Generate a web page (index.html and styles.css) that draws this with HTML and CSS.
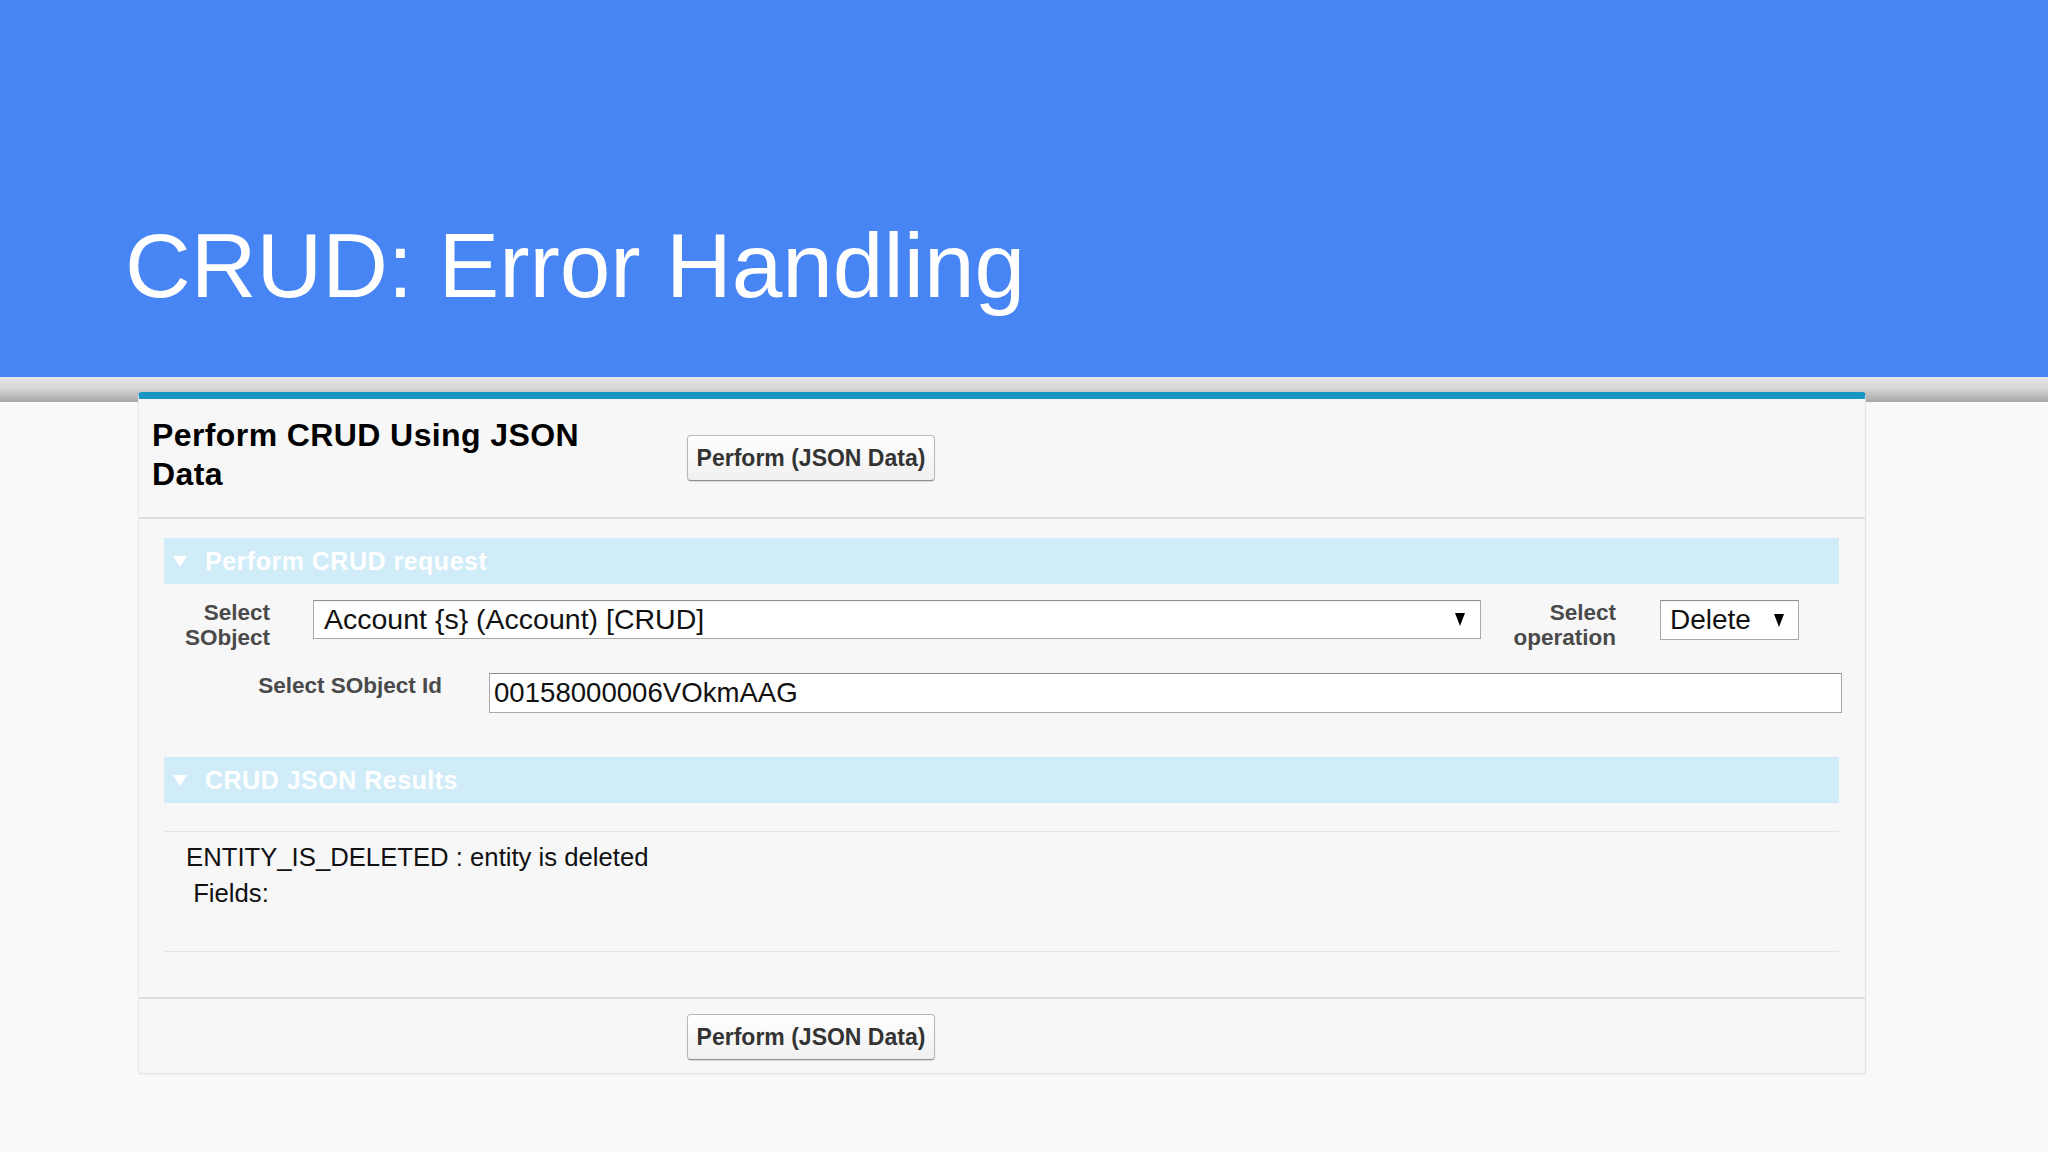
FILE: index.html
```html
<!DOCTYPE html>
<html lang="en">
<head>
<meta charset="utf-8">
<title>CRUD: Error Handling</title>
<link rel="stylesheet" href="styles.css">
</head>
<body>
<header class="slide-head">
  <h1 class="slide-title">CRUD: Error Handling</h1>
</header>
<div class="band"></div>
<main class="card">
  <div class="card-head">
    <h2 class="card-title">Perform CRUD Using JSON Data</h2>
    <button class="btn btn-head" type="button">Perform (JSON Data)</button>
  </div>
  <div class="card-body">
    <div class="sec-bar"><span class="tri"></span><span class="sec-text">Perform CRUD request</span></div>
    <div class="row row-obj">
      <span class="lbl lbl-obj">Select SObject</span>
      <div class="sel sel-obj"><span class="sel-text">Account {s} (Account) [CRUD]</span><span class="arr"></span></div>
      <span class="lbl lbl-op">Select operation</span>
      <div class="sel sel-op"><span class="sel-text">Delete</span><span class="arr"></span></div>
    </div>
    <div class="row row-id">
      <span class="lbl lbl-id">Select SObject Id</span>
      <div class="inp">00158000006VOkmAAG</div>
    </div>
    <div class="sec-bar sec-results"><span class="tri"></span><span class="sec-text">CRUD JSON Results</span></div>
    <div class="results">ENTITY_IS_DELETED : entity is deleted<br>&nbsp;Fields:</div>
  </div>
  <div class="card-foot">
    <button class="btn" type="button">Perform (JSON Data)</button>
  </div>
</main>
</body>
</html>
```
FILE: styles.css
```css
* { box-sizing: border-box; }

body {
  margin: 0;
  background: #f9f8fa;
  font-family: "Liberation Sans", Arial, sans-serif;
  width: 2048px;
  height: 1152px;
  overflow: hidden;
}

.slide-head {
  height: 377px;
  background: #4785f4;
  padding: 214px 0 0 125px;
}

.slide-title {
  margin: 0;
  font-size: 91px;
  font-weight: 400;
  line-height: normal;
  color: #ffffff;
}

.band {
  height: 25px;
  background: linear-gradient(#e8e8e8 0%, #d6d6d6 45%, #a7a7a7 100%);
}

.card {
  display: block;
  margin: -10px 0 0 138px;
  width: 1728px;
  background: #f7f7f8;
  border-top: 7px solid #1896c1;
  border-left: 1px solid #ebebed;
  border-right: 1px solid #e3e3e5;
  border-bottom: 1px solid #e3e3e5;
  border-radius: 4px;
  box-shadow: 0 1px 2px rgba(0, 0, 0, 0.05);
}

.card-head {
  display: flex;
  align-items: flex-start;
  padding: 17px 0 23px 13px;
  border-bottom: 2px solid #dfdfe2;
}

.card-title {
  margin: 0 85px 0 0;
  width: 450px;
  font-size: 32px;
  line-height: 39px;
  font-weight: 700;
  letter-spacing: 0.4px;
  color: #000;
}

.btn {
  width: 248px;
  height: 46px;
  padding: 0;
  font-family: "Liberation Sans", Arial, sans-serif;
  font-size: 23px;
  font-weight: 700;
  color: #333;
  background: linear-gradient(#ffffff, #f0f0f0);
  border: 1px solid #b8b8b8;
  border-bottom-color: #8e8e8e;
  border-radius: 4px;
  box-shadow: 0 1px 1px rgba(0, 0, 0, 0.12);
}

.btn-head { margin-top: 19px; }

.card-body {
  padding: 19px 26px 45px 25px;
}

.sec-bar {
  display: flex;
  align-items: center;
  height: 46px;
  background: #cfecf8;
  padding-left: 9px;
}

.tri {
  width: 0;
  height: 0;
  border-left: 7px solid transparent;
  border-right: 7px solid transparent;
  border-top: 11px solid #ffffff;
  margin-right: 18px;
}

.sec-text {
  font-size: 25px;
  font-weight: 700;
  letter-spacing: 0.5px;
  color: #ffffff;
}

.row {
  display: flex;
  align-items: flex-start;
}

.row-obj { margin-top: 16px; }
.row-id { margin-top: 23px; }

.lbl {
  flex: 0 0 auto;
  font-size: 22.5px;
  line-height: 25px;
  font-weight: 700;
  color: #4a4a4a;
  text-align: right;
}

.lbl-obj { width: 106px; }
.lbl-op { width: 107px; margin-left: 28px; }
.lbl-id { width: 278px; }

.sel {
  flex: 0 0 auto;
  display: flex;
  align-items: center;
  justify-content: space-between;
  height: 39px;
  background: #ffffff;
  border: 1px solid #a9a9a9;
  border-top-color: #8f8f8f;
  box-shadow: inset 0 1px 1px rgba(0, 0, 0, 0.06);
}

.sel-obj {
  width: 1168px;
  margin-left: 43px;
  padding: 0 15px 0 10px;
}

.sel-op {
  width: 139px;
  height: 40px;
  margin-left: 44px;
  padding: 0 14px 0 9px;
}

.sel-text {
  font-size: 28px;
  color: #111;
  white-space: nowrap;
}

.sel-obj .sel-text { font-size: 28.5px; }

.arr {
  width: 0;
  height: 0;
  border-left: 5px solid transparent;
  border-right: 5px solid transparent;
  border-top: 13px solid #000;
}

.inp {
  flex: 0 0 auto;
  width: 1353px;
  height: 40px;
  margin-left: 47px;
  padding-left: 4px;
  display: flex;
  align-items: center;
  font-size: 27.6px;
  color: #111;
  background: #ffffff;
  border: 1px solid #a9a9a9;
  border-top-color: #8f8f8f;
}

.sec-results { margin-top: 44px; }

.results {
  margin-top: 28px;
  padding: 7px 0 40px 22px;
  border-top: 1px solid #e5e5e7;
  border-bottom: 1px solid #e5e5e7;
  font-size: 25.7px;
  line-height: 36px;
  color: #111;
}

.card-foot {
  border-top: 2px solid #dfdfe2;
  padding: 15px 0 13px 548px;
}
```
